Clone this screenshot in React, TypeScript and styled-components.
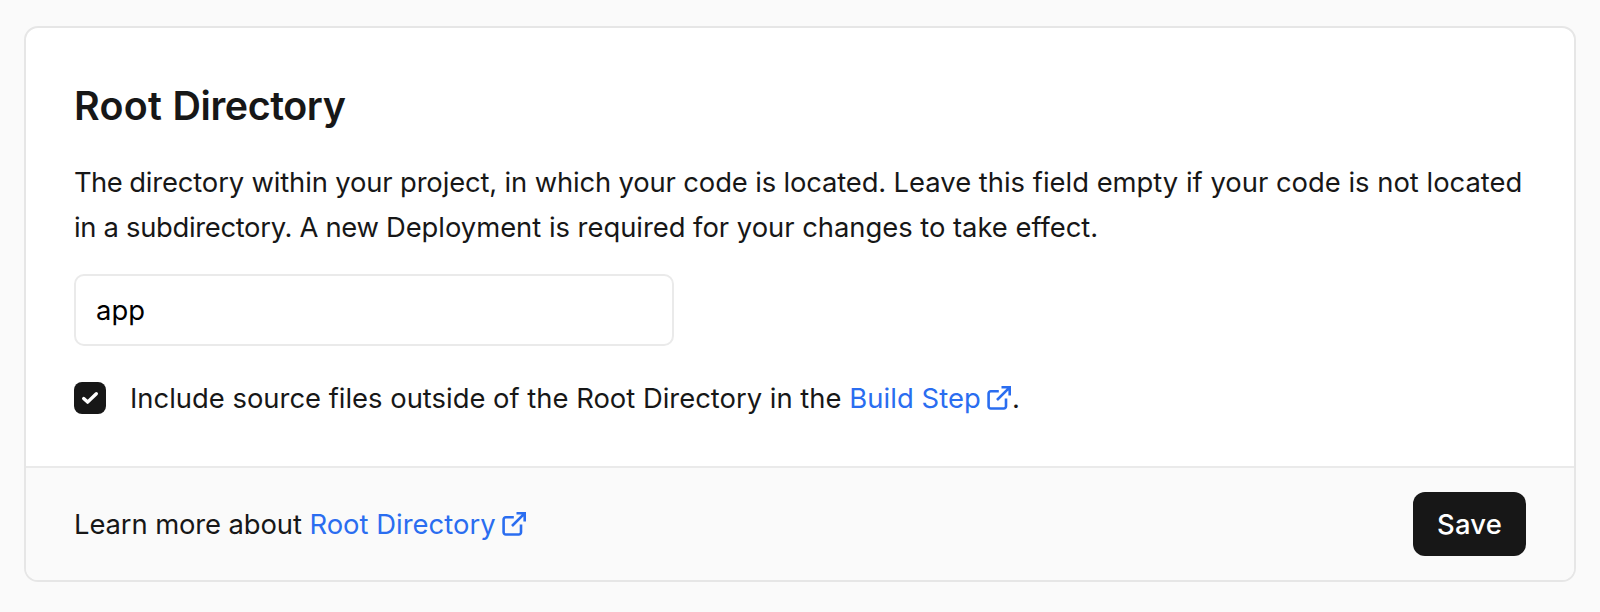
import React, { useState } from 'react';
import styled, { createGlobalStyle } from 'styled-components';

const GlobalStyle = createGlobalStyle`
  *, *::before, *::after { box-sizing: border-box; }
  body {
    margin: 0;
    background: #fafafa;
    color: #171717;
    font-family: Inter, "Liberation Sans", sans-serif;
    font-size: 27.4px;
    line-height: 44px;
  }
`;

const Page = styled.main`
  min-height: 612px;
  padding: 26px 24px 30px;
`;

const Card = styled.section`
  display: flex;
  flex-direction: column;
  height: 556px;
  border: 2px solid #e6e6e6;
  border-radius: 14px;
  background: #fff;
  overflow: hidden;
`;

const CardBody = styled.div`
  flex: 1;
  padding: 48px;
`;

const Title = styled.h2`
  margin: 0 0 24px;
  font-size: 39.4px;
  font-weight: 600;
  line-height: 60px;
`;

const Description = styled.p`
  margin: 0 0 24px;
  line-height: 45px;
`;

const Line = styled.span`
  display: block;
  white-space: nowrap;
`;

const Phrase = styled.span<{ $tracking: number }>`
  letter-spacing: ${(p) => p.$tracking}px;
`;

const TextField = styled.input`
  display: block;
  width: 600px;
  height: 72px;
  padding: 0 20px;
  border: 2px solid #eaeaea;
  border-radius: 10px;
  outline: none;
  background: #fff;
  color: #000;
  font: inherit;
  letter-spacing: 0.1px;
`;

const CheckRow = styled.label`
  display: flex;
  align-items: center;
  gap: 24px;
  height: 32px;
  margin-top: 36px;
  white-space: nowrap;
`;

const HiddenCheckbox = styled.input`
  appearance: none;
  width: 0;
  height: 0;
  margin: 0 -24px 0 0;
`;

const CheckBox = styled.span`
  display: grid;
  place-items: center;
  flex: none;
  width: 32px;
  height: 32px;
  border-radius: 8px;
  background: #171717;
`;

const Link = styled.a<{ $tracking: number }>`
  color: #2a6df0;
  text-decoration: none;
  letter-spacing: ${(p) => p.$tracking}px;
`;

const LinkIcon = styled.svg`
  width: 26px;
  height: 26px;
  margin-left: 5px;
  vertical-align: -3px;
`;

const CardFooter = styled.footer`
  display: flex;
  align-items: center;
  justify-content: space-between;
  height: 114px;
  padding: 0 48px;
  border-top: 2px solid #eaeaea;
  background: #fafafa;
`;

const SaveButton = styled.button`
  width: 113px;
  height: 64px;
  padding: 0;
  border: 0;
  border-radius: 12px;
  background: #171717;
  color: #fff;
  font: inherit;
  font-weight: 500;
  letter-spacing: 0.2px;
`;

function ExternalIcon() {
  return (
    <LinkIcon viewBox="0 0 26 26" fill="none" stroke="currentColor" strokeWidth="2.6">
      <path d="M12.8 6.2H4.8a2.2 2.2 0 0 0-2.2 2.2v12.9a2.2 2.2 0 0 0 2.2 2.2h13a2.2 2.2 0 0 0 2.2-2.2V13.6" />
      <path d="M15.5 2.3H23.7V10.5M23.4 2.6 11 15" />
    </LinkIcon>
  );
}

export default function App() {
  const [directory, setDirectory] = useState('app');
  const [include, setInclude] = useState(true);
  return (
    <>
      <GlobalStyle />
      <Page>
        <Card>
          <CardBody>
            <Title>
              <Phrase $tracking={0.3}>Root </Phrase>
              <Phrase $tracking={-0.42}>Directory</Phrase>
            </Title>
            <Description>
              <Line>
                <Phrase $tracking={-0.6}>The </Phrase>
                <Phrase $tracking={-0.145}>
                  directory within your project, in which your code is located.{' '}
                </Phrase>
                <Phrase $tracking={0}>Leave this field empty if your code is not located</Phrase>
              </Line>
              <Line>
                <Phrase $tracking={-0.32}>in a subdirectory. A new </Phrase>
                <Phrase $tracking={-0.025}>Deployment is required for your changes to take effect.</Phrase>
              </Line>
            </Description>
            <TextField value={directory} onChange={(e) => setDirectory(e.target.value)} />
            <CheckRow>
              <HiddenCheckbox type="checkbox" checked={include} onChange={() => setInclude(!include)} />
              <CheckBox>
                {include && (
                  <svg width="32" height="32" viewBox="0 0 32 32" fill="none" stroke="#fff" strokeWidth="3.4">
                    <path d="M9.7 16.6 13.6 20.1 22.3 11.7" strokeLinecap="round" strokeLinejoin="round" />
                  </svg>
                )}
              </CheckBox>
              <span>
                <Phrase $tracking={0}>Include source files outside of the Root Directory in the </Phrase>
                <Link $tracking={0.1} href="#build-step">
                  Build Step
                  <ExternalIcon />
                </Link>
                .
              </span>
            </CheckRow>
          </CardBody>
          <CardFooter>
            <span>
              <Phrase $tracking={-0.1}>Learn more about </Phrase>
              <Link $tracking={0.02} href="#root-directory">
                Root Directory
                <ExternalIcon />
              </Link>
            </span>
            <SaveButton type="button">Save</SaveButton>
          </CardFooter>
        </Card>
      </Page>
    </>
  );
}
